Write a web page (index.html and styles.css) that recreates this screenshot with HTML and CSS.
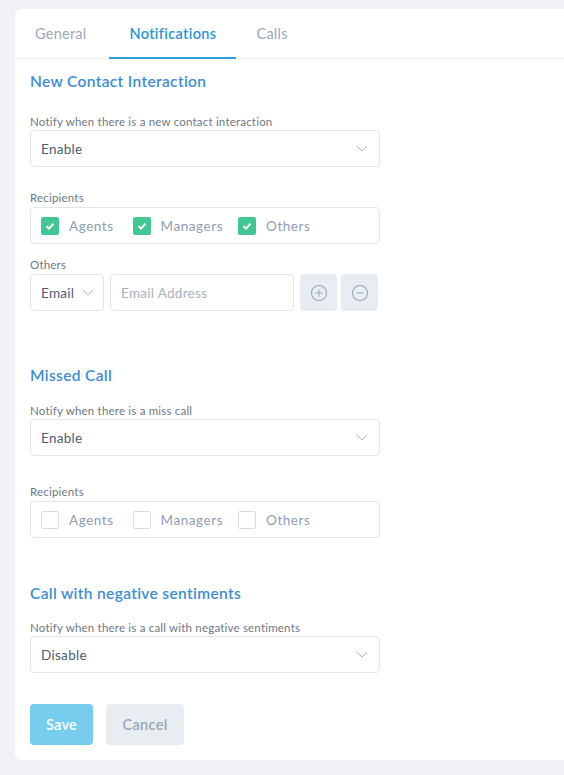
FILE: index.html
```html
<!DOCTYPE html>
<html>
<head>
<meta charset="utf-8">
<link rel="stylesheet" href="styles.css">
</head>
<body>
<div class="card">
  <div class="tabs">
    <div class="tab">General</div>
    <div class="tab active">Notifications</div>
    <div class="tab">Calls</div>
  </div>
  <div class="content">
    <section class="section first">
      <h2 class="heading">New Contact Interaction</h2>
      <div class="label">Notify when there is a new contact interaction</div>
      <div class="select wide"><span>Enable</span><svg class="chev" viewBox="0 0 12 7" width="12" height="7"><path d="M1 1l5 5 5-5" fill="none" stroke="#aab4c0" stroke-width="1"/></svg></div>
      <div class="label gap">Recipients</div>
      <div class="checks">
        <label class="check"><span class="box on"><svg viewBox="0 0 18 18" width="18" height="18"><path d="M5.5 9.2l2.4 2.4 4.6-4.8" fill="none" stroke="#fff" stroke-width="2"/></svg></span>Agents</label>
        <label class="check"><span class="box on"><svg viewBox="0 0 18 18" width="18" height="18"><path d="M5.5 9.2l2.4 2.4 4.6-4.8" fill="none" stroke="#fff" stroke-width="2"/></svg></span>Managers</label>
        <label class="check"><span class="box on"><svg viewBox="0 0 18 18" width="18" height="18"><path d="M5.5 9.2l2.4 2.4 4.6-4.8" fill="none" stroke="#fff" stroke-width="2"/></svg></span>Others</label>
      </div>
      <div class="label gap-sm">Others</div>
      <div class="row">
        <div class="select small"><span>Email</span><svg class="chev" viewBox="0 0 12 7" width="12" height="7"><path d="M1 1l5 5 5-5" fill="none" stroke="#aab4c0" stroke-width="1"/></svg></div>
        <div class="input">Email Address</div>
        <div class="iconbtn"><svg viewBox="0 0 18 18" width="18" height="18"><circle cx="9" cy="9" r="7.5" fill="none" stroke="#9aa8b8" stroke-width="1.1"/><path d="M5.5 9h7M9 5.5v7" stroke="#9aa8b8" stroke-width="1.1"/></svg></div>
        <div class="iconbtn minus"><svg viewBox="0 0 18 18" width="18" height="18"><circle cx="9" cy="9" r="7.5" fill="none" stroke="#9aa8b8" stroke-width="1.1"/><path d="M5.5 9h7" stroke="#9aa8b8" stroke-width="1.1"/></svg></div>
      </div>
    </section>

    <section class="section second">
      <h2 class="heading">Missed Call</h2>
      <div class="label">Notify when there is a miss call</div>
      <div class="select wide"><span>Enable</span><svg class="chev" viewBox="0 0 12 7" width="12" height="7"><path d="M1 1l5 5 5-5" fill="none" stroke="#aab4c0" stroke-width="1"/></svg></div>
      <div class="label gap-lg">Recipients</div>
      <div class="checks">
        <label class="check"><span class="box"></span>Agents</label>
        <label class="check"><span class="box"></span>Managers</label>
        <label class="check"><span class="box"></span>Others</label>
      </div>
    </section>

    <section class="section third">
      <h2 class="heading">Call with negative sentiments</h2>
      <div class="label">Notify when there is a call with negative sentiments</div>
      <div class="select wide"><span>Disable</span><svg class="chev" viewBox="0 0 12 7" width="12" height="7"><path d="M1 1l5 5 5-5" fill="none" stroke="#aab4c0" stroke-width="1"/></svg></div>
    </section>

    <div class="actions">
      <button class="btn save">Save</button>
      <button class="btn cancel">Cancel</button>
    </div>
  </div>
</div>
</body>
</html>
```

FILE: styles.css
```css
html, body {
  margin: 0;
  padding: 0;
  overflow: hidden;
}
body {
  background: #f0f2f5;
  font-family: "Lato", "Open Sans", sans-serif;
  padding: 9px 0 15px 15px;
}
.card {
  background: #fff;
  border-radius: 6px 0 0 6px;
  margin-right: -20px;
  height: 751px;
  box-sizing: border-box;
}
.tabs {
  display: flex;
  height: 50px;
  border-bottom: 1px solid #edf0f3;
  box-sizing: border-box;
}
.tab {
  padding: 0 20px;
  font-size: 14.5px;
  color: #9ba8b7;
  display: flex;
  align-items: center;
  letter-spacing: 0.25px;
  border-bottom: 2px solid transparent;
  margin-bottom: -1px;
}
.tab:first-child { padding-right: 23px; }
.tab.active {
  color: #2b93da;
  border-bottom-color: #2f9be0;
  font-weight: 600;
  letter-spacing: 0.35px;
}
.content {
  padding: 0 15px;
}
.section {
  width: 350px;
}
.heading {
  margin: 0;
  font-size: 15.5px;
  line-height: 20px;
  font-weight: 600;
  color: #3b8ed6;
  letter-spacing: 0.35px;
}
.first { padding-top: 12px; }
.first .heading { margin-bottom: 24px; }
.second { padding-top: 54px; }
.second .heading { margin-bottom: 19px; }
.third .heading { margin-bottom: 18px; }
.third { padding-top: 45px; }
.label {
  font-size: 11.5px;
  line-height: 14px;
  color: #6d7886;
  margin-bottom: 1px;
  letter-spacing: 0.2px;
}
.label.gap { margin-top: 24px; margin-bottom: 2px; }
.label.gap-sm { margin-top: 14px; margin-bottom: 2px; }
.label.gap-lg { margin-top: 29px; margin-bottom: 2px; }
.select, .input, .checks {
  border: 1px solid #e1e5ea;
  border-radius: 4px;
  height: 37px;
  box-sizing: border-box;
  display: flex;
  align-items: center;
  font-size: 13.5px;
  letter-spacing: 0.3px;
}
.select {
  justify-content: space-between;
  padding: 0 11px 0 10px;
  color: #4d5d6f;
}
.select.wide { width: 350px; }
.select.small { width: 74px; padding-right: 9px; }
.chev { flex: none; }
.checks {
  width: 350px;
  padding: 0 10px;
}
.check {
  display: flex;
  align-items: center;
  color: #8f9db0;
  font-size: 13.5px;
  letter-spacing: 0.55px;
  margin-right: 19px;
}
.check:nth-child(2) { margin-right: 15px; }
.box {
  width: 18px;
  height: 18px;
  border: 1px solid #d7dde4;
  border-radius: 2px;
  box-sizing: border-box;
  margin-right: 10px;
  display: block;
}
.box.on {
  background: #41c794;
  border-color: #41c794;
}
.box.on svg {
  display: block;
  margin: -1px;
}
.row {
  display: flex;
  align-items: center;
  width: 350px;
}
.input {
  width: 184px;
  margin-left: 6px;
  padding: 0 10px;
  color: #a6b2c0;
}
.iconbtn {
  width: 37px;
  height: 37px;
  border-radius: 4px;
  background: #e8edf2;
  margin-left: 6px;
  display: flex;
  align-items: center;
  justify-content: center;
}
.iconbtn.minus { margin-left: 4px; }
.actions {
  display: flex;
  gap: 13px;
  margin-top: 31px;
}
.btn {
  height: 41px;
  border: none;
  border-radius: 4px;
  font-family: "Lato", "Open Sans", sans-serif;
  font-size: 14.5px;
  letter-spacing: 0.3px;
  padding: 0;
}
.save {
  width: 63px;
  background: #76cdee;
  color: #fff;
  font-weight: 600;
}
.cancel {
  width: 78px;
  background: #e8edf2;
  color: #9aa7b8;
  font-weight: 600;
}
```
